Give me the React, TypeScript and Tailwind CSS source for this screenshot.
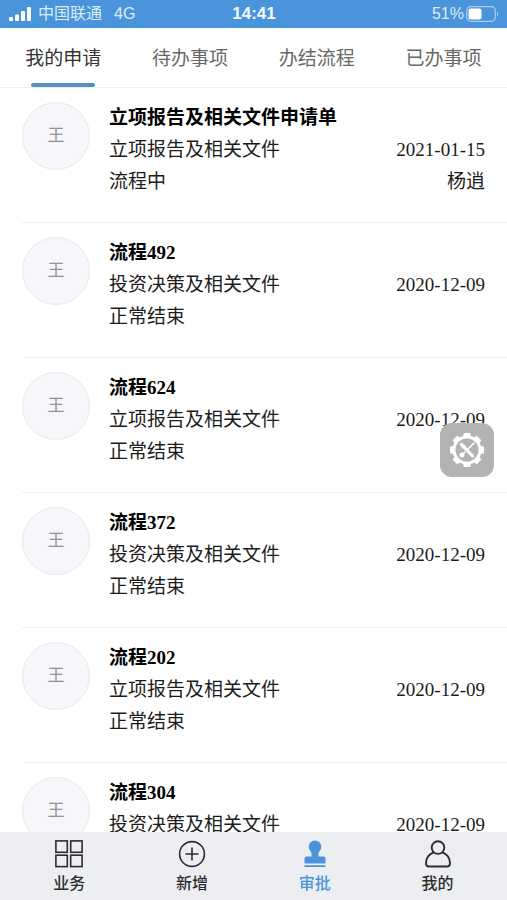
import { useState } from 'react';

interface Application {
  id: number;
  title: string;
  category: string;
  date: string;
  status: string;
  handler?: string;
}

const TABS = ['我的申请', '待办事项', '办结流程', '已办事项'];

const APPLICATIONS: Application[] = [
  {
    id: 1,
    title: '立项报告及相关文件申请单',
    category: '立项报告及相关文件',
    date: '2021-01-15',
    status: '流程中',
    handler: '杨逍',
  },
  { id: 2, title: '流程492', category: '投资决策及相关文件', date: '2020-12-09', status: '正常结束' },
  { id: 3, title: '流程624', category: '立项报告及相关文件', date: '2020-12-09', status: '正常结束' },
  { id: 4, title: '流程372', category: '投资决策及相关文件', date: '2020-12-09', status: '正常结束' },
  { id: 5, title: '流程202', category: '立项报告及相关文件', date: '2020-12-09', status: '正常结束' },
  { id: 6, title: '流程304', category: '投资决策及相关文件', date: '2020-12-09', status: '正常结束' },
];

const GEAR_TEETH = [0, 45, 90, 135, 180, 225, 270, 315];

function SignalIcon() {
  return (
    <svg width="23" height="14" viewBox="0 0 23 14" fill="currentColor" aria-hidden="true">
      <rect x="0" y="10" width="4" height="4" rx="1" />
      <rect x="6" y="7.5" width="4" height="6.5" rx="1" />
      <rect x="12" y="4" width="4" height="10" rx="1" />
      <rect x="18" y="0" width="4" height="14" rx="1" />
    </svg>
  );
}

function BatteryIcon() {
  return (
    <svg width="33" height="16" viewBox="0 0 33 16" aria-hidden="true">
      <rect x="0.7" y="0.7" width="28.6" height="14.6" rx="4" fill="none" stroke="#a9cdf0" strokeWidth="1.2" />
      <rect x="2.5" y="2.5" width="13" height="11" rx="2" fill="#fff" />
      <path d="M31 5.5c1.6.7 1.6 4.3 0 5z" fill="#a9cdf0" />
    </svg>
  );
}

function GridIcon() {
  return (
    <svg width="28" height="28" viewBox="0 0 28 28" fill="none" stroke="currentColor" strokeWidth="1.6" aria-hidden="true">
      <rect x="0.9" y="0.9" width="11.4" height="11.4" />
      <rect x="15.7" y="0.9" width="11.4" height="11.4" />
      <rect x="0.9" y="15.2" width="11.4" height="11.4" />
      <rect x="15.7" y="15.2" width="11.4" height="11.4" />
    </svg>
  );
}

function PlusIcon() {
  return (
    <svg width="28" height="28" viewBox="0 0 28 28" fill="none" stroke="currentColor" strokeWidth="1.6" aria-hidden="true">
      <circle cx="14" cy="14" r="12.4" />
      <path d="M14 7.5v13M7.5 14h13" />
    </svg>
  );
}

function StampIcon() {
  return (
    <svg width="28" height="28" viewBox="0 0 28 28" fill="currentColor" aria-hidden="true">
      <path d="M14 .5a6.3 6.3 0 0 1 6.3 6.3c0 2.2-1 3.5-2 4.6-.6.7-.8 1.2-.8 2v3.200h5a2 2 0 0 1 2 2v5H3.500v-5a2 2 0 0 1 2-2h5v-3.200c0-.8-.2-1.300-.8-2-1-1.100-2-2.400-2-4.600A6.300 6.300 0 0 1 14 .5z" />
      <rect x="3.5" y="25.200" width="21" height="1.800" />
    </svg>
  );
}

function UserIcon() {
  return (
    <svg width="28" height="28" viewBox="0 0 28 28" fill="none" stroke="currentColor" strokeWidth="1.9" strokeLinejoin="round" aria-hidden="true">
      <circle cx="14" cy="7.6" r="6.3" />
      <path d="M9.6 12.3C5.3 14 2 18 2 23.2c0 2.3 1 3.300 3 3.300h18c2 0 3-1 3-3.300 0-5.200-3.300-9.200-7.600-10.900" />
    </svg>
  );
}

function GearToolsIcon() {
  return (
    <svg width="36" height="36" viewBox="0 0 36 36" aria-hidden="true">
      <circle cx="18" cy="18" r="13" fill="none" stroke="#fff" strokeWidth="3" />
      {GEAR_TEETH.map((angle) => (
        <path key={angle} d="M13.8 5.5 14.8 1h6.4l1 4.5z" fill="#fff" transform={`rotate(${angle} 18 18)`} />
      ))}
      <path d="M14.500 14.500l9 9.500" stroke="#fff" strokeWidth="3.200" strokeLinecap="round" />
      <path d="M10.500 12.300l1.800-1.800 4 2.800.5 3.500-3.500-.5z" fill="#fff" />
      <path d="M25 11l-6 6M16 20l-2 2" stroke="#fff" strokeWidth="1.600" strokeLinecap="round" />
      <circle cx="13" cy="23" r="2.500" fill="#fff" />
    </svg>
  );
}

const NAV_ITEMS = [
  { label: '业务', Icon: GridIcon },
  { label: '新增', Icon: PlusIcon },
  { label: '审批', Icon: StampIcon },
  { label: '我的', Icon: UserIcon },
];

function StatusBar() {
  return (
    <div className="grid h-7 shrink-0 grid-cols-[1fr_auto_1fr] items-center bg-[#4a94db] pr-2 pl-[9px] text-base text-[#dcebfa]">
      <div className="flex items-center">
        <span className="text-white">
          <SignalIcon />
        </span>
        <span className="ml-1.5 leading-[28px]">中国联通</span>
        <span className="ml-3">4G</span>
      </div>
      <span className="text-[17px] font-bold text-[#f2f8fe]">14:41</span>
      <div className="flex items-center justify-end gap-0.5">
        <span>51%</span>
        <BatteryIcon />
      </div>
    </div>
  );
}

function ApplicationRow({ item }: { item: Application }) {
  return (
    <li className="flex h-[135px] gap-[19px] border-b border-[#efefef] pt-3.5 pr-[22px]">
      <div className="flex size-[68px] shrink-0 items-center justify-center rounded-full border border-[#e6e8ec] bg-[#f6f7fb] text-[17px] text-[#929296]">
        王
      </div>
      <div className="min-w-0 flex-1 font-['Liberation_Serif','Noto_Sans_CJK_SC',serif] text-[19px] leading-[32px] text-[#1c1c1c]">
        <h2 className="truncate font-bold text-black">{item.title}</h2>
        <div className="flex justify-between">
          <span>{item.category}</span>
          <time dateTime={item.date}>{item.date}</time>
        </div>
        <div className="flex justify-between">
          <span>{item.status}</span>
          {item.handler && <span>{item.handler}</span>}
        </div>
      </div>
    </li>
  );
}

export default function App() {
  const [activeTab, setActiveTab] = useState('我的申请');
  const [activeNav, setActiveNav] = useState('审批');

  return (
    <div className="relative flex h-screen flex-col overflow-hidden bg-white font-['Liberation_Sans','Noto_Sans_CJK_SC',sans-serif]">
      <StatusBar />

      <div role="tablist" className="grid h-[60px] shrink-0 grid-cols-4 border-b border-[#efefef]">
        {TABS.map((tab) => {
          const active = tab === activeTab;
          return (
            <button
              key={tab}
              type="button"
              role="tab"
              aria-selected={active}
              onClick={() => setActiveTab(tab)}
              className={[
                'flex flex-col items-center justify-between text-[19px] leading-[30px]',
                active ? 'text-[#333333]' : 'text-[#686868]',
              ].join(' ')}
            >
              <span className="pt-4">{tab}</span>
              <span className={active ? 'h-1 w-16 rounded-full bg-[#5590c5]' : 'h-1 w-16'} />
            </button>
          );
        })}
      </div>

      <ul className="min-h-0 flex-1 overflow-y-auto pl-[22px] [scrollbar-width:none]">
        {APPLICATIONS.map((item) => (
          <ApplicationRow key={item.id} item={item} />
        ))}
      </ul>

      <nav className="grid h-[68px] shrink-0 grid-cols-4 bg-[#eceef2] px-2">
        {NAV_ITEMS.map(({ label, Icon }) => (
          <button
            key={label}
            type="button"
            onClick={() => setActiveNav(label)}
            className={[
              'flex flex-col items-center gap-1 pt-2 text-base leading-[24px] font-medium',
              label === activeNav ? 'text-[#4a94db]' : 'text-[#2d2d31]',
            ].join(' ')}
          >
            <Icon />
            <span>{label}</span>
          </button>
        ))}
      </nav>

      <button
        type="button"
        aria-label="设置"
        className="absolute top-[423px] right-[13px] flex size-[54px] items-center justify-center rounded-xl bg-[#b3b3b3]"
      >
        <GearToolsIcon />
      </button>
    </div>
  );
}
